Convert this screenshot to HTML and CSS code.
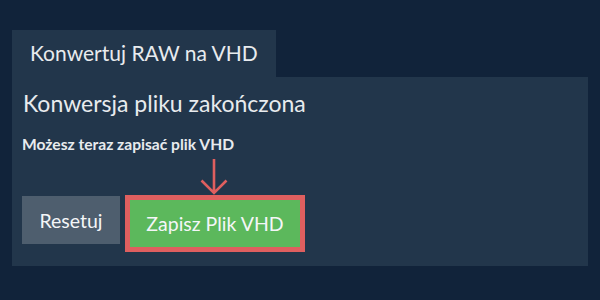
FILE: index.html
```html
<!DOCTYPE html>
<html lang="pl">
<head>
  <meta charset="UTF-8" />
  <title>Konwertuj RAW na VHD</title>
  <link rel="stylesheet" href="styles.css">
</head>
<body>
  <div class="tabs">
    <div class="tab">Konwertuj RAW na VHD</div>
  </div>
  <div class="panel">
    <h2 class="title">Konwersja pliku zakończona</h2>
    <p class="info">Możesz teraz zapisać plik VHD</p>
    <div class="actions">
      <button class="btn reset">Resetuj</button>
      <div class="save-wrap">
        <svg class="arrow" width="28" height="36" viewBox="0 0 28 36">
          <path d="M14 0 V34 M1.5 21.5 L14 34 L26.5 21.5" fill="none" stroke="#df5f5f" stroke-width="2.6" />
        </svg>
        <button class="btn save">Zapisz Plik VHD</button>
      </div>
    </div>
  </div>
</body>
</html>
```

FILE: styles.css
```css
body {
  margin: 0;
  padding: 30px 12px 0;
  background: #11233a;
  font-family: Lato, 'Open Sans', sans-serif;
  color: #e8ebee;
  height: 300px;
  box-sizing: border-box;
}

.tabs {
  display: flex;
}

.tab {
  background: #22364b;
  height: 47px;
  line-height: 46px;
  padding: 0 18px;
  font-size: 21px;
}

.panel {
  background: #22364b;
  height: 189px;
  padding: 11px 10px 0 10px;
  box-sizing: border-box;
}

.title {
  margin: 0 0 0 1px;
  font-size: 23px;
  font-weight: normal;
  line-height: 30px;
}

.info {
  margin: 16px 0 0 0;
  font-size: 15.6px;
  font-weight: bold;
  line-height: 20px;
}

.actions {
  display: flex;
  align-items: flex-start;
  gap: 5px;
  margin-top: 42px;
}

.btn {
  font-family: inherit;
  font-size: 19.5px;
  color: #f4f6f8;
  border: none;
  cursor: pointer;
}

.reset {
  width: 98px;
  height: 48px;
  background: #4e5e6e;
}

.save-wrap {
  position: relative;
}

.arrow {
  position: absolute;
  left: 75px;
  top: -37px;
}

.save {
  width: 180px;
  height: 57px;
  background: #5cb85c;
  border: 5px solid #df5f5f;
  margin-top: -1px;
}
```
